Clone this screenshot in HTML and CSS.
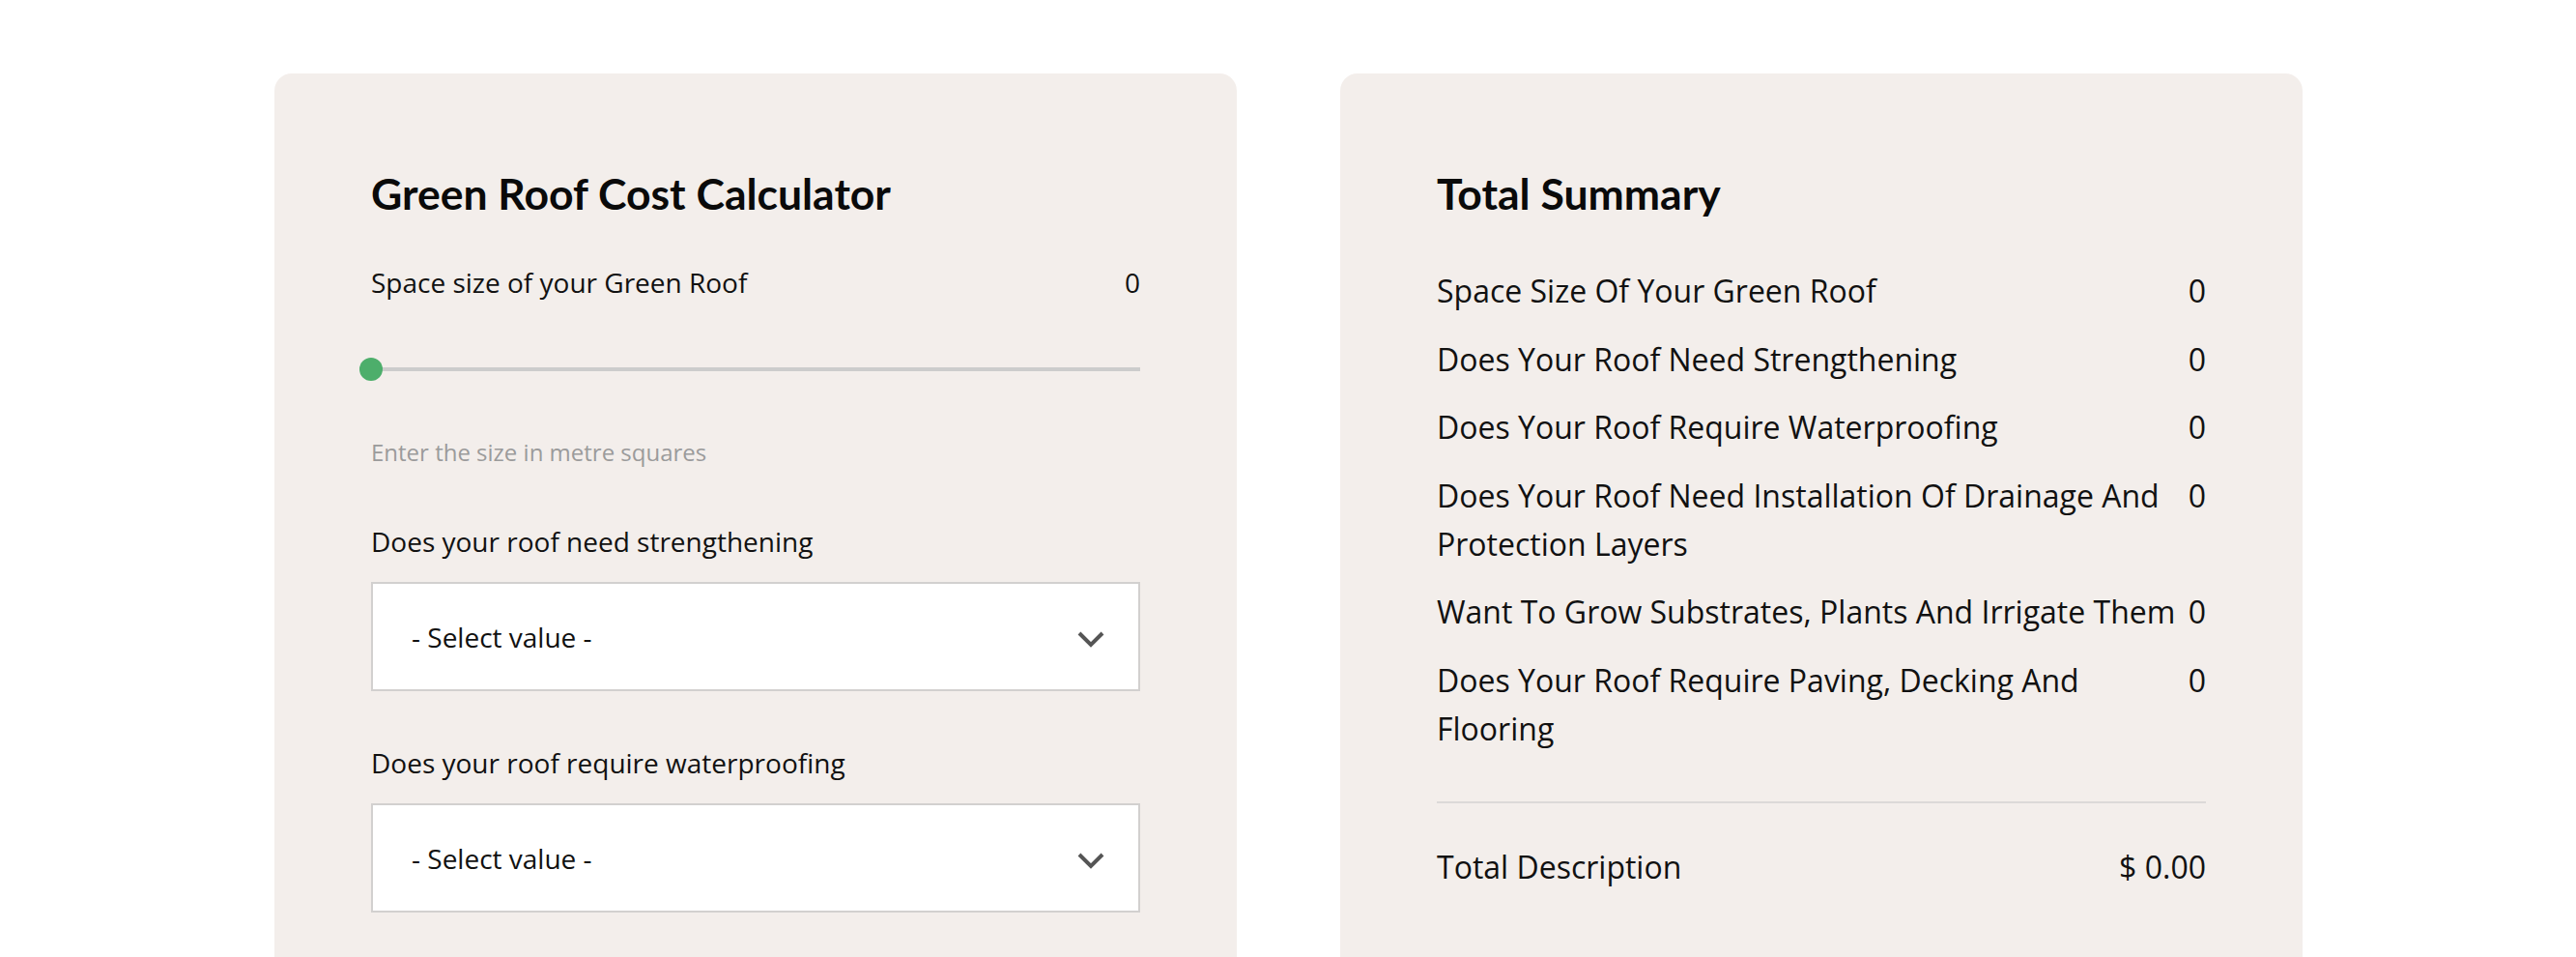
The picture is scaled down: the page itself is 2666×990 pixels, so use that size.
FILE: index.html
```html
<!DOCTYPE html>
<html lang="en">
<head>
<meta charset="utf-8">
<title>Green Roof Cost Calculator</title>
<link rel="stylesheet" href="styles.css">
</head>
<body>
<main class="calculator">
  <section class="card calc-card">
    <h2 class="card-title">Green Roof Cost Calculator</h2>

    <div class="field field-range">
      <div class="range-head">
        <span class="field-label-text">Space size of your Green Roof</span>
        <span class="range-value">0</span>
      </div>
      <div class="slider">
        <div class="slider-track"></div>
        <div class="slider-thumb"></div>
      </div>
      <p class="hint">Enter the size in metre squares</p>
    </div>

    <div class="field">
      <div class="field-label">Does your roof need strengthening</div>
      <div class="select">
        <span class="select-text">- Select value -</span>
        <svg class="chevron" width="28" height="18" viewBox="0 0 28 18"><polyline points="2,3 14,15 26,3" fill="none" stroke="#555" stroke-width="4"/></svg>
      </div>
    </div>

    <div class="field">
      <div class="field-label">Does your roof require waterproofing</div>
      <div class="select">
        <span class="select-text">- Select value -</span>
        <svg class="chevron" width="28" height="18" viewBox="0 0 28 18"><polyline points="2,3 14,15 26,3" fill="none" stroke="#555" stroke-width="4"/></svg>
      </div>
    </div>
  </section>

  <section class="card summary-card">
    <h2 class="card-title">Total Summary</h2>
    <div class="summary-list">
      <div class="summary-row"><span class="summary-label">Space Size Of Your Green Roof</span><span class="summary-value">0</span></div>
      <div class="summary-row"><span class="summary-label">Does Your Roof Need Strengthening</span><span class="summary-value">0</span></div>
      <div class="summary-row"><span class="summary-label">Does Your Roof Require Waterproofing</span><span class="summary-value">0</span></div>
      <div class="summary-row"><span class="summary-label">Does Your Roof Need Installation Of Drainage And Protection Layers</span><span class="summary-value">0</span></div>
      <div class="summary-row"><span class="summary-label">Want To Grow Substrates, Plants And Irrigate Them</span><span class="summary-value">0</span></div>
      <div class="summary-row"><span class="summary-label">Does Your Roof Require Paving, Decking And Flooring</span><span class="summary-value">0</span></div>
    </div>
    <div class="summary-divider"></div>
    <div class="summary-total">
      <span class="summary-label">Total Description</span>
      <span class="summary-value">$ 0.00</span>
    </div>
  </section>
</main>
</body>
</html>
```

FILE: styles.css
```css
* {
  box-sizing: border-box;
}

html, body {
  margin: 0;
  padding: 0;
  background: #ffffff;
}

body {
  font-family: "Open Sans", "Liberation Sans", sans-serif;
  color: #111111;
}

.calculator {
  display: flex;
  align-items: stretch;
  gap: 107px;
  padding: 76px 283px 0 284px;
}

.card {
  width: 996px;
  flex: 0 0 996px;
  background: #f3eeeb;
  border-radius: 18px;
  padding: 98px 100px 110px 100px;
}

.card-title {
  margin: 0 0 45px 0;
  font-family: Lato, "Open Sans", sans-serif;
  font-weight: 700;
  font-size: 44.5px;
  line-height: 52px;
  color: #0a0a0a;
}

/* ---- Calculator ---- */

.field + .field {
  margin-top: 53px;
}

.range-head {
  display: flex;
  justify-content: space-between;
  font-size: 28px;
  line-height: 42px;
}

.slider {
  position: relative;
  height: 24px;
  margin-top: 57px;
}

.slider-track {
  position: relative;
  top: 10px;
  height: 4px;
  background: #cccccc;
}

.slider-thumb {
  position: absolute;
  left: -12px;
  top: 0;
  width: 24px;
  height: 24px;
  border-radius: 50%;
  background: #4dae6b;
}

.hint {
  margin: 56px 0 0 0;
  font-size: 24px;
  line-height: 36px;
  color: #9b9b9b;
}

.field-label {
  font-size: 28px;
  line-height: 42px;
  margin-bottom: 21px;
}

.select {
  display: flex;
  align-items: center;
  justify-content: space-between;
  height: 113px;
  background: #ffffff;
  border: 2px solid #d2d0cf;
  padding: 0 35px 0 40px;
  font-size: 28px;
}

.chevron {
  display: block;
  margin-top: 4px;
}

/* ---- Summary ---- */

.summary-list {
  display: flex;
  flex-direction: column;
  gap: 20.5px;
  padding-top: 5px;
}

.summary-row,
.summary-total {
  display: flex;
  justify-content: space-between;
  align-items: flex-start;
  gap: 12px;
  font-size: 32px;
  line-height: 50px;
}

.summary-label {
  flex: 1 1 auto;
}

.summary-value {
  flex: 0 0 auto;
}

.summary-divider {
  height: 2px;
  background: #dcd9d8;
  margin-top: 50px;
}

.summary-total {
  margin-top: 41px;
}
```
